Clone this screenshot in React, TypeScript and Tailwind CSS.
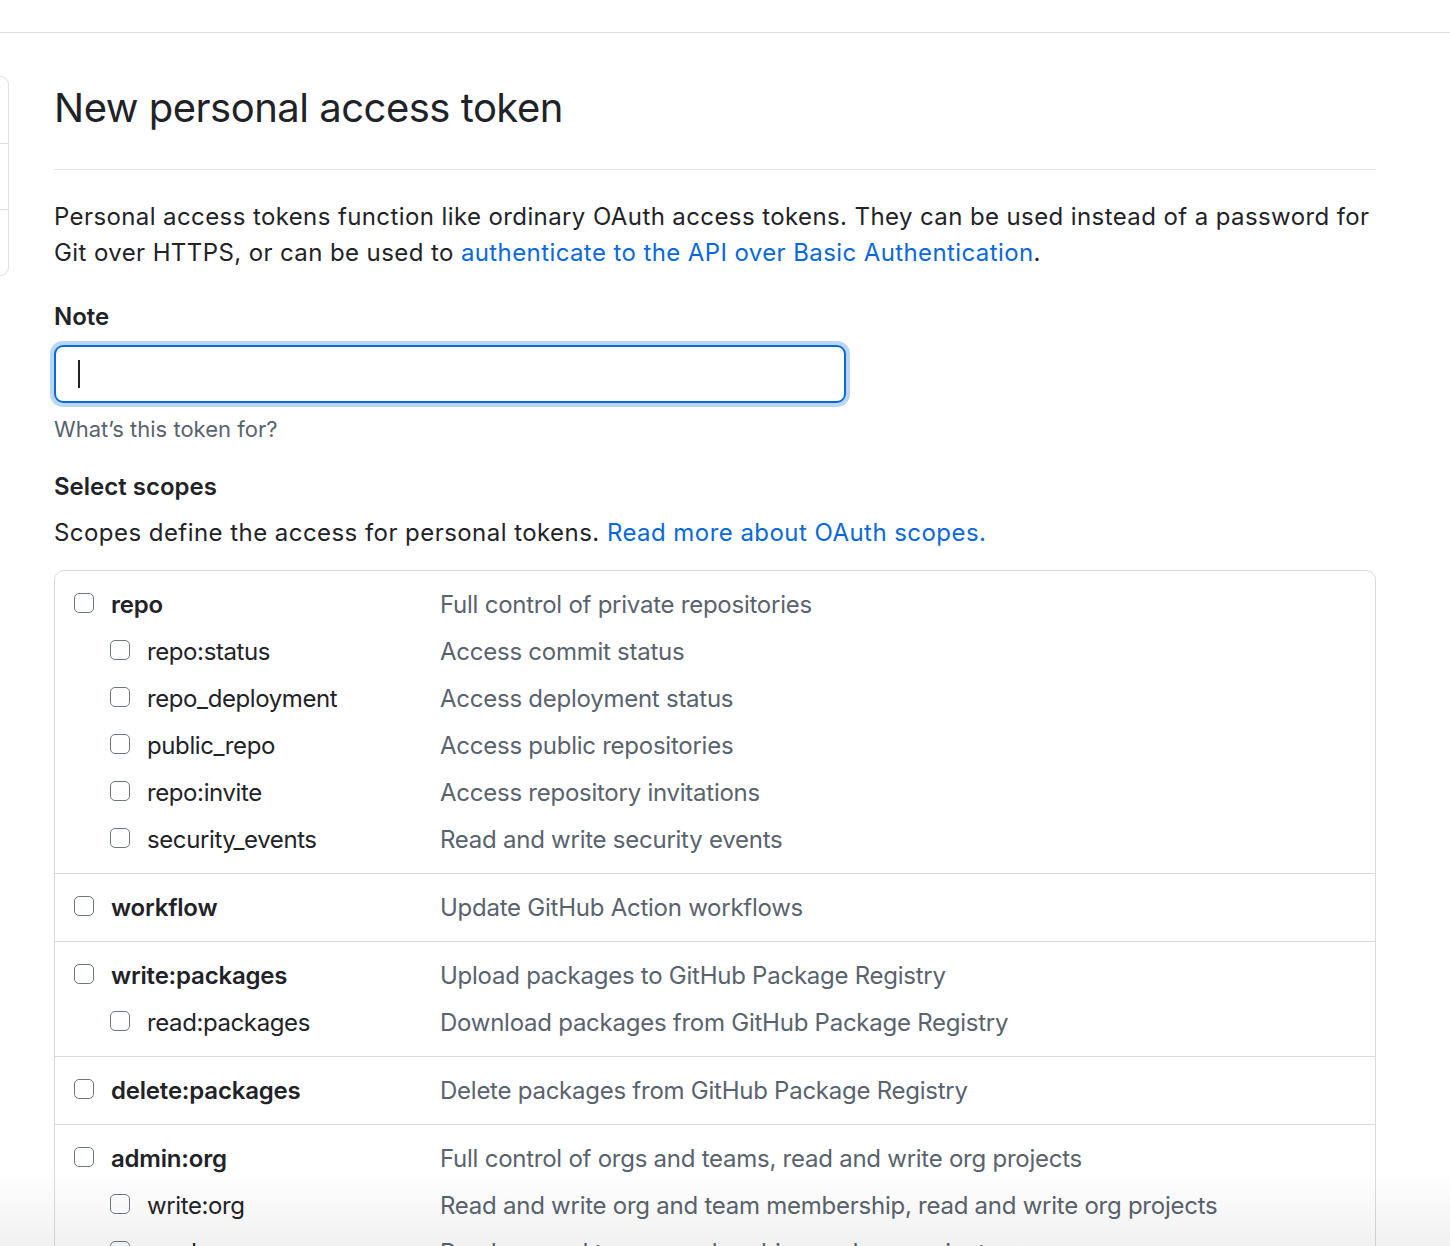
import React from 'react';

type Scope = { name: string; desc: string; sub?: { name: string; desc: string }[] };

const scopes: Scope[] = [
  {
    name: 'repo',
    desc: 'Full control of private repositories',
    sub: [
      { name: 'repo:status', desc: 'Access commit status' },
      { name: 'repo_deployment', desc: 'Access deployment status' },
      { name: 'public_repo', desc: 'Access public repositories' },
      { name: 'repo:invite', desc: 'Access repository invitations' },
      { name: 'security_events', desc: 'Read and write security events' },
    ],
  },
  { name: 'workflow', desc: 'Update GitHub Action workflows' },
  {
    name: 'write:packages',
    desc: 'Upload packages to GitHub Package Registry',
    sub: [{ name: 'read:packages', desc: 'Download packages from GitHub Package Registry' }],
  },
  { name: 'delete:packages', desc: 'Delete packages from GitHub Package Registry' },
  {
    name: 'admin:org',
    desc: 'Full control of orgs and teams, read and write org projects',
    sub: [
      { name: 'write:org', desc: 'Read and write org and team membership, read and write org projects' },
      { name: 'read:org', desc: 'Read org and team membership, read org projects' },
      { name: 'manage_runners:org', desc: 'Manage org runners and runner groups' },
    ],
  },
  {
    name: 'admin:public_key',
    desc: 'Full control of user public keys',
    sub: [
      { name: 'write:public_key', desc: 'Write user public keys' },
      { name: 'read:public_key', desc: 'Read user public keys' },
    ],
  },
];

const Checkbox = () => (
  <span className="w-[20px] h-[20px] -mt-[3px] rounded-[5px] border-[1.5px] border-[#6e7781] bg-white shrink-0" />
);

const Row = ({ name, desc, top }: { name: string; desc: string; top?: boolean }) => (
  <div className="flex items-center h-[47px]">
    <div className={`flex items-center w-[366px] shrink-0 ${top ? '' : 'pl-[36px]'}`}>
      <Checkbox />
      <span className={`ml-[17px] ${top ? 'font-semibold tracking-[-0.2px]' : 'tracking-[-0.4px]'}`}>{name}</span>
    </div>
    <span className="text-[#59636e] tracking-[-0.25px]">{desc}</span>
  </div>
);

export default function App() {
  return (
    <div
      className="min-h-[1246px] bg-white text-[#1f2328] text-[24px] leading-[36px]"
      style={{ fontFamily: 'Inter, "Noto Sans", sans-serif' }}
    >
      <div className="h-[33px] border-b border-[#dcdfe3]" />
      <div className="flex">
        <div className="w-[9px] shrink-0 mt-[43px] h-[200px] border border-l-0 border-[#dcdfe3] rounded-r-[9px] flex flex-col">
          <div className="h-[67px] border-b border-[#dcdfe3]" />
          <div className="h-[66px] border-b border-[#dcdfe3]" />
        </div>
        <div className="ml-[45px] w-[1322px] pb-[40px]">
          <div className="pt-[50px] pb-[36px] border-b border-[#e1e4e8]">
            <h1 className="text-[40px] leading-[50px] font-normal tracking-[-0.5px]">New personal access token</h1>
          </div>
          <p className="mt-[29px] tracking-[0.4px]">
            Personal access tokens function like ordinary OAuth access tokens. They can be used instead of a password for
            <br />
            Git over HTTPS, or can be used to{' '}
            <a className="text-[#0969da]">authenticate to the API over Basic Authentication</a>.
          </p>
          <div className="mt-[28px] font-semibold">Note</div>
          <div className="mt-[10px] w-[792px] h-[58px] rounded-[9px] border-2 border-[#0969da] shadow-[0_0_0_4px_rgba(9,105,218,0.28)] flex items-center pl-[22px]">
            <span className="w-[2px] h-[28px] bg-[#1f2328]" />
          </div>
          <div className="mt-[11px] text-[22px] leading-[30px] text-[#59636e]">What’s this token for?</div>
          <div className="mt-[25px] font-semibold">Select scopes</div>
          <p className="mt-[10px] tracking-[0.45px]">
            Scopes define the access for personal tokens.{' '}
            <a className="text-[#0969da]">Read more about OAuth scopes.</a>
          </p>
          <div className="mt-[19px] border border-[#d8dce1] rounded-[10px]">
            {scopes.map((s, i) => (
              <div key={s.name} className={`pl-[19px] py-[10px] ${i > 0 ? 'border-t border-[#d8dce1]' : ''}`}>
                <Row name={s.name} desc={s.desc} top />
                {s.sub?.map((c) => (
                  <Row key={c.name} name={c.name} desc={c.desc} />
                ))}
              </div>
            ))}
          </div>
        </div>
      </div>
      <div className="fixed left-0 right-0 bottom-0 h-[76px] bg-linear-to-b from-white to-[#f1f1f1] mix-blend-multiply pointer-events-none" />
    </div>
  );
}
